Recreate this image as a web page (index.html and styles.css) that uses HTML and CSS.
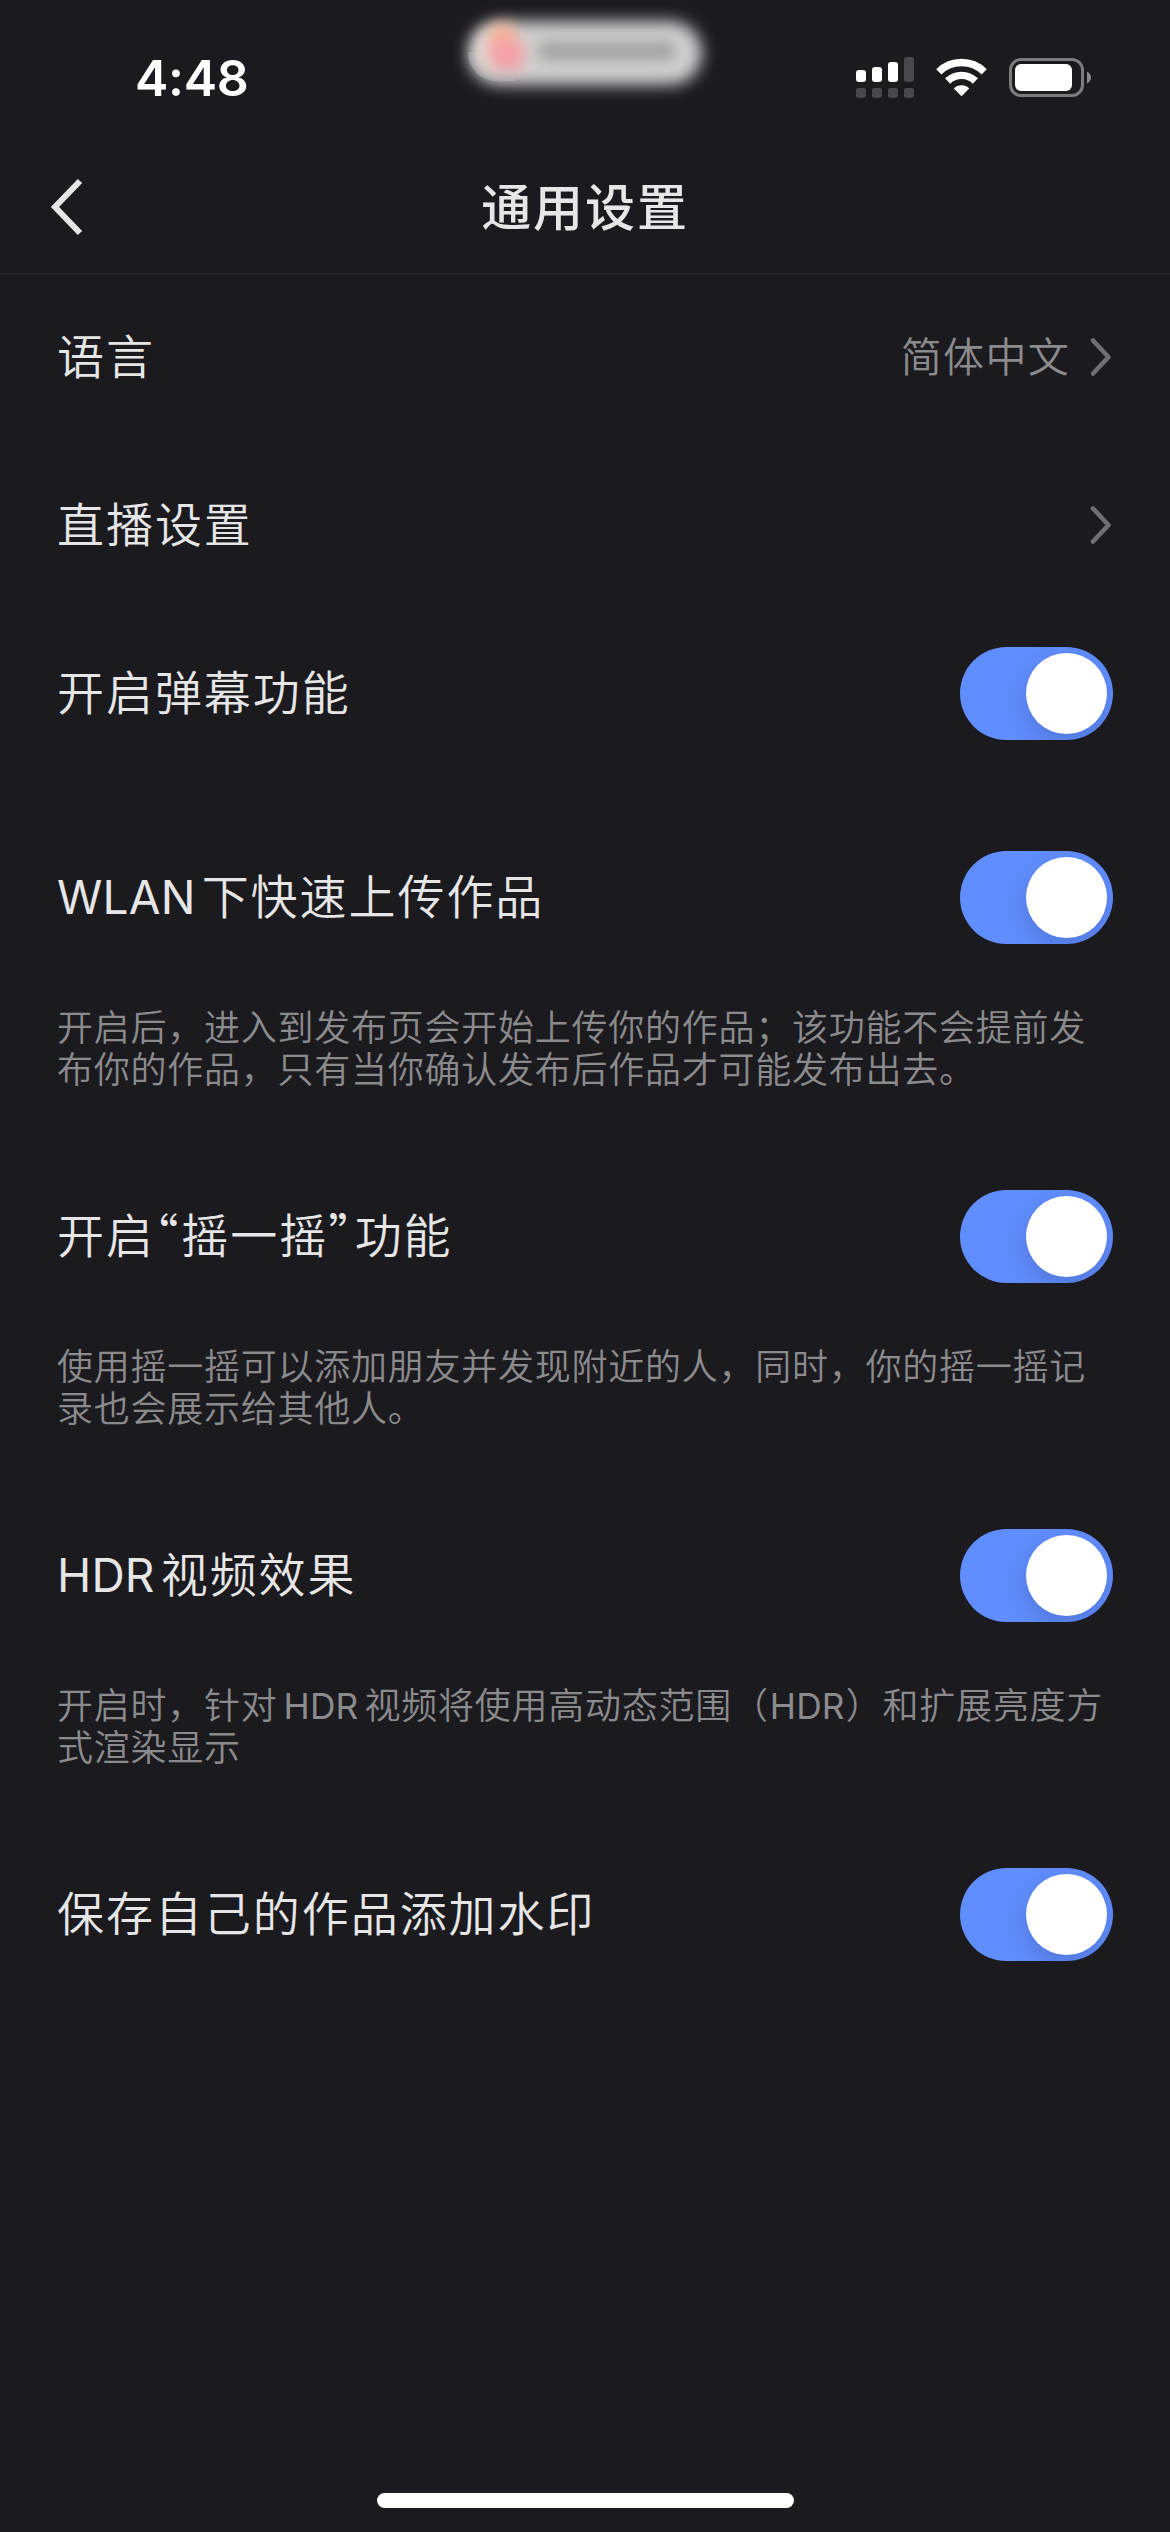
FILE: index.html
```html
<!DOCTYPE html>
<html lang="zh-CN">
<head>
<meta charset="utf-8">
<title>通用设置</title>
<link rel="stylesheet" href="styles.css">
</head>
<body>
<div class="screen">
  <div class="status">
    <div class="time">4:48</div>
    <svg class="island" width="290" height="120" viewBox="440 0 290 120">
      <defs>
        <filter id="soft" x="-20%" y="-60%" width="140%" height="220%"><feGaussianBlur stdDeviation="8"/></filter>
        <filter id="spot" x="-60%" y="-100%" width="220%" height="300%"><feGaussianBlur stdDeviation="7"/></filter>
      </defs>
      <rect x="468" y="21" width="234" height="64" rx="32" fill="#d0d0d0" filter="url(#soft)"/>
      <path d="M468 52A28 29 0 0 0 496 81H515V52Z" fill="#c4c4c4" opacity=".35"/>
      <rect x="476" y="30" width="30" height="40" rx="15" fill="#e2d8d2" filter="url(#spot)"/>
      <rect x="490" y="24" width="26" height="26" rx="8" fill="#f4b090" filter="url(#spot)"/>
      <rect x="490" y="40" width="34" height="30" rx="8" fill="#f6a0a8" filter="url(#spot)"/>
      <rect x="538" y="41" width="138" height="20" rx="8" fill="#9c9c9c" opacity=".85" filter="url(#spot)"/>
    </svg>
    <svg class="indicators" width="235" height="40" viewBox="856 57 235 40">
      <g fill="#fff">
        <rect x="856" y="70" width="10" height="12" rx="3"/>
        <rect x="872" y="67" width="10" height="15" rx="3"/>
        <rect x="888" y="62" width="10" height="20" rx="3"/>
      </g>
      <g fill="#49494d">
        <rect x="904" y="57" width="10" height="25" rx="3"/>
        <rect x="856" y="88" width="10" height="10" rx="3"/>
        <rect x="872" y="88" width="10" height="10" rx="3"/>
        <rect x="888" y="88" width="10" height="10" rx="3"/>
        <rect x="904" y="88" width="10" height="10" rx="3"/>
      </g>
      <g fill="none" stroke="#fff" stroke-width="7.4">
        <path d="M938.8 71.8A32.5 32.5 0 0 1 984.2 71.8"/>
        <path d="M947.6 81A20 20 0 0 1 975.4 81"/>
      </g>
      <path d="M961.500 96.200L953.800 88.400A11 11 0 0 1 969.200 88.400Z" fill="#fff"/>
      <rect x="1010.500" y="59.500" width="72" height="36" rx="10.500" fill="none" stroke="#7b7b7e" stroke-width="3"/>
      <rect x="1015" y="64" width="57" height="27" rx="6" fill="#fff"/>
      <path d="M1087 71.500Q1091 74 1091 77.500T1087 83.500Z" fill="#8b8b8e"/>
    </svg>
  </div>
  <div class="navbar">
    <svg class="back" width="34" height="58" viewBox="0 0 34 58"><path d="M30 3L5 29L30 55" fill="none" stroke="#e6e6e6" stroke-width="6"/></svg>
    <div class="title">通用设置</div>
  </div>
  <div class="list">
    <div class="row">
      <div class="label">语言</div>
      <div class="value">简体中文</div>
      <svg class="chevron" width="24" height="40" viewBox="0 0 24 40"><path d="M4 3.500L19.500 20L4 36.500" fill="none" stroke="#6f6f72" stroke-width="4.600" stroke-linecap="round" stroke-linejoin="round"/></svg>
    </div>
    <div class="row">
      <div class="label">直播设置</div>
      <svg class="chevron" width="24" height="40" viewBox="0 0 24 40"><path d="M4 3.500L19.500 20L4 36.500" fill="none" stroke="#6f6f72" stroke-width="4.600" stroke-linecap="round" stroke-linejoin="round"/></svg>
    </div>
    <div class="row">
      <div class="label">开启弹幕功能</div>
      <div class="switch"><div class="knob"></div></div>
    </div>
    <div class="group">
      <div class="row">
        <div class="label"><span class="latin">WLAN</span>下快速上传作品</div>
        <div class="switch"><div class="knob"></div></div>
      </div>
      <div class="note">开启后，进入到发布页会开始上传你的作品；该功能不会提前发<br>布你的作品，只有当你确认发布后作品才可能发布出去。</div>
    </div>
    <div class="group">
      <div class="row">
        <div class="label">开启<span class="quote">“</span>摇一摇<span class="quote">”</span>功能</div>
        <div class="switch"><div class="knob"></div></div>
      </div>
      <div class="note">使用摇一摇可以添加朋友并发现附近的人，同时，你的摇一摇记<br>录也会展示给其他人。</div>
    </div>
    <div class="group">
      <div class="row">
        <div class="label"><span class="latin">HDR</span>视频效果</div>
        <div class="switch"><div class="knob"></div></div>
      </div>
      <div class="note">开启时，针对<span class="latin mid">HDR</span>视频将使用高动态范围（<span class="latin plain">HDR</span>）和扩展亮度方<br>式渲染显示</div>
    </div>
    <div class="group">
      <div class="row">
        <div class="label">保存自己的作品添加水印</div>
        <div class="switch"><div class="knob"></div></div>
      </div>
    </div>
  </div>
  <div class="home"></div>
</div>
</body>
</html>
```
FILE: styles.css
```css
* { box-sizing: border-box; }
body {
  margin: 0;
  background: #1b1a1f;
  color: #e6e6e6;
  font-family: "Noto Sans CJK SC", sans-serif;
}
.screen {
  display: flex;
  flex-direction: column;
  width: 1170px;
  height: 2532px;
  padding-bottom: 24px;
  overflow: hidden;
}
.status {
  display: grid;
  grid-template-columns: 440px 290px 1fr;
  height: 141px;
  flex: none;
}
.time {
  padding: 48px 0 0 135px;
  font: 600 50px/60px Inter, sans-serif;
  letter-spacing: -0.3px;
  color: #fff;
}
.indicators { margin: 57px 0 0 126px; overflow: visible; }
.navbar {
  display: grid;
  grid-template-columns: 120px 1fr 120px;
  align-items: center;
  height: 133px;
  flex: none;
  border-bottom: 1px solid #2c2b30;
}
.back { margin-left: 50px; }
.title {
  margin-bottom: 6px;
  text-align: center;
  font-size: 50px;
  font-weight: 500;
  line-height: 60px;
  letter-spacing: 1.9px;
}
.list { flex: 1; margin-top: -1px; padding: 0 57px; }
.row { display: flex; align-items: center; height: 168px; }
.label {
  flex: 1;
  margin-bottom: 6px;
  font-size: 47px;
  font-weight: 350;
  line-height: 60px;
  letter-spacing: 1.95px;
  white-space: nowrap;
}
.latin {
  font-family: Inter, sans-serif;
  font-size: 0.98em;
  font-weight: 400;
  line-height: 1;
  letter-spacing: 0.2px;
  margin-right: 6px;
}
.latin.mid { margin: 0 6px; }
.latin.plain { margin: 0 1px; }
.quote { font-feature-settings: "halt"; margin-right: 1px; }
.value {
  margin: 0 19px 6px 0;
  font-size: 41px;
  font-weight: 350;
  line-height: 60px;
  letter-spacing: 1.3px;
  color: #8b8b8d;
}
.switch {
  display: flex;
  justify-content: flex-end;
  width: 153px;
  height: 93px;
  padding: 6px;
  border-radius: 47px;
  background: #608dff;
  overflow: hidden;
}
.knob {
  width: 81px;
  height: 81px;
  border-radius: 50%;
  background: #fff;
  box-shadow: 0 9px 24px rgba(0, 0, 0, 0.16);
}
.group { padding-top: 36px; height: 339px; }
.note {
  margin-top: 23px;
  font-size: 36px;
  font-weight: 350;
  line-height: 42px;
  letter-spacing: 0.75px;
  color: #8b8b8d;
  white-space: nowrap;
}
.note .latin { line-height: 0; }
.home {
  align-self: center;
  flex: none;
  width: 417px;
  height: 15px;
  border-radius: 8px;
  background: #fff;
}
```
